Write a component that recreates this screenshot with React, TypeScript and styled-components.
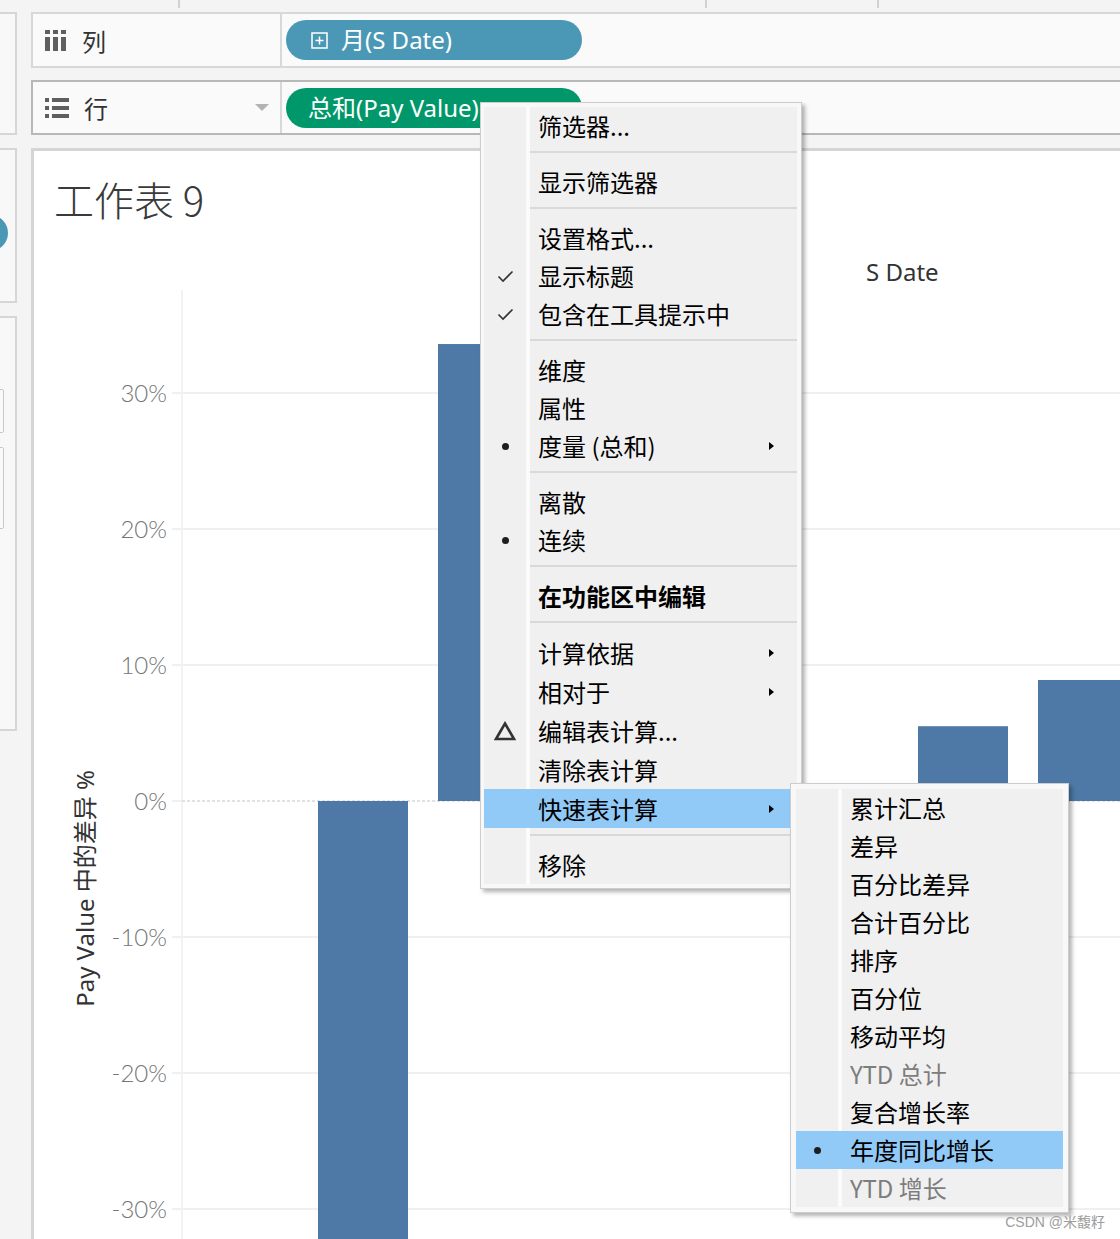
import { createGlobalStyle, styled } from 'styled-components'

type MenuEntry =
  | 'sep'
  | {
      label: string
      mark?: 'check' | 'dot' | 'delta'
      arrow?: boolean
      bold?: boolean
      active?: boolean
      muted?: boolean
      h?: number
    }

const mainMenu: MenuEntry[] = [
  { label: '筛选器...' },
  'sep',
  { label: '显示筛选器' },
  'sep',
  { label: '设置格式...' },
  { label: '显示标题', mark: 'check' },
  { label: '包含在工具提示中', mark: 'check' },
  'sep',
  { label: '维度' },
  { label: '属性' },
  { label: '度量 (总和)', mark: 'dot', arrow: true },
  'sep',
  { label: '离散' },
  { label: '连续', mark: 'dot' },
  'sep',
  { label: '在功能区中编辑', bold: true },
  'sep',
  { label: '计算依据', arrow: true, h: 39 },
  { label: '相对于', arrow: true, h: 39 },
  { label: '编辑表计算...', mark: 'delta', h: 39 },
  { label: '清除表计算', h: 39 },
  { label: '快速表计算', arrow: true, active: true, h: 39 },
  'sep',
  { label: '移除' },
]

const quickMenu: MenuEntry[] = [
  { label: '累计汇总' },
  { label: '差异' },
  { label: '百分比差异' },
  { label: '合计百分比' },
  { label: '排序' },
  { label: '百分位' },
  { label: '移动平均' },
  { label: 'YTD 总计', muted: true },
  { label: '复合增长率' },
  { label: '年度同比增长', mark: 'dot', active: true },
  { label: 'YTD 增长', muted: true },
]

// percent -> svg y, 0% sits at 511, 136px per 10%
const yOf = (v: number) => 511 - v * 13.6
const ticks = [30, 20, 10, 0, -10, -20, -30]
const bars = [
  { x: 208, v: -36 },
  { x: 328, v: 33.6 },
  { x: 808, v: 5.5 },
  { x: 928, v: 8.9 },
]

const MarkIcon = ({ kind }: { kind?: 'check' | 'dot' | 'delta' }) => {
  if (kind === 'check')
    return (
      <svg width="17" height="13" viewBox="0 0 17 13">
        <polyline points="1.5,6.5 6,11 15.5,1.5" fill="none" stroke="#333" strokeWidth="1.6" />
      </svg>
    )
  if (kind === 'dot') return <Dot />
  if (kind === 'delta')
    return (
      <svg width="22" height="20" viewBox="0 0 22 20">
        <polygon points="11,2.5 20,18 2,18" fill="none" stroke="#333" strokeWidth="2.6" strokeLinejoin="miter" />
      </svg>
    )
  return null
}

const Menu = ({ items }: { items: MenuEntry[] }) => (
  <MenuList>
    {items.map((it, i) =>
      it === 'sep' ? (
        <Separator key={i} />
      ) : (
        <MenuRow key={i} $h={it.h ?? 38} $active={it.active}>
          <Gutter>
            <MarkIcon kind={it.mark} />
          </Gutter>
          <MenuText $bold={it.bold} $muted={it.muted}>
            {it.label}
          </MenuText>
          <ArrowCell>{it.arrow && <Arrow />}</ArrowCell>
        </MenuRow>
      ),
    )}
  </MenuList>
)

const App = () => {
  return (
    <>
      <GlobalStyle />
      <Page>
        <TopStrip>
          <Tick $at={178} />
          <Tick $at={525} />
          <Tick $at={170} />
        </TopStrip>

        <LeftRail>
          <RailPanel $h={123} />
          <RailPanel $h={155}>
            <RailKnob />
          </RailPanel>
          <RailPanel $h={415}>
            <RailTab $top={71} $h={44} />
            <RailTab $top={14} $h={82} />
          </RailPanel>
        </LeftRail>

        <Main>
          <Shelf>
            <ShelfLabel>
              <svg width="22" height="21" viewBox="0 0 22 21">
                {[0, 8, 16].map((x) => (
                  <g key={x} fill="#5f5f5f">
                    <rect x={x} y="0" width="5" height="4" />
                    <rect x={x} y="7" width="5" height="14" />
                  </g>
                ))}
              </svg>
              <LabelText>列</LabelText>
            </ShelfLabel>
            <ShelfBody>
              <Pill $bg="#4a98b5" $pad={25}>
                <svg width="17" height="17" viewBox="0 0 17 17">
                  <rect x="1" y="1" width="15" height="15" fill="none" stroke="#fff" strokeWidth="1.5" />
                  <path d="M8.5 4.5v8M4.5 8.5h8" stroke="#fff" strokeWidth="1.5" />
                </svg>
                月(S Date)
              </Pill>
            </ShelfBody>
          </Shelf>

          <Shelf $dark>
            <ShelfLabel>
              <svg width="24" height="20" viewBox="0 0 24 20">
                {[0, 8, 16].map((y) => (
                  <g key={y} fill="#5f5f5f">
                    <rect x="0" y={y} width="4" height="4" />
                    <rect x="7" y={y} width="17" height="4" />
                  </g>
                ))}
              </svg>
              <LabelText>行</LabelText>
              <DropCaret />
            </ShelfLabel>
            <ShelfBody>
              <Pill $bg="#00986a" $pad={22}>
                总和(Pay Value)
              </Pill>
            </ShelfBody>
          </Shelf>

          <Worksheet>
            <SheetTitle>工作表 9</SheetTitle>
            <ColumnHeader>S Date</ColumnHeader>
            <ChartRow>
              <AxisTitleCell>
                <AxisTitle>Pay Value 中的差异 %</AxisTitle>
              </AxisTitleCell>
              <ChartSvg width="1010" height="949" viewBox="0 0 1010 949">
                <line x1="72" y1="0" x2="72" y2="949" stroke="#efefef" strokeWidth="1.5" />
                {ticks.map((t) => (
                  <g key={t}>
                    {t !== 0 && (
                      <line x1="62" y1={yOf(t)} x2="1010" y2={yOf(t)} stroke="#f0f0f0" strokeWidth="2" />
                    )}
                    {t === 0 && (
                      <>
                        <line x1="62" y1={yOf(0)} x2="72" y2={yOf(0)} stroke="#f0f0f0" strokeWidth="2" />
                        <line
                          x1="72"
                          y1={yOf(0)}
                          x2="1010"
                          y2={yOf(0)}
                          stroke="#c4c4c4"
                          strokeWidth="1"
                          strokeDasharray="3 2"
                        />
                      </>
                    )}
                    <TickLabel x="57" y={yOf(t) - 1} textAnchor="end" dominantBaseline="central">
                      {t}%
                    </TickLabel>
                  </g>
                ))}
                {bars.map((b) => (
                  <rect
                    key={b.x}
                    x={b.x}
                    y={Math.min(yOf(b.v), yOf(0))}
                    width="90"
                    height={Math.abs(yOf(b.v) - yOf(0))}
                    fill="#4e79a7"
                  />
                ))}
              </ChartSvg>
            </ChartRow>
          </Worksheet>
        </Main>

        <ContextMenu $left={480} $top={102} $pad="4px 4px 4px 3px">
          <Menu items={mainMenu} />
        </ContextMenu>
        <ContextMenu $left={790} $top={783} $pad="5px 5px 5px 5px">
          <SubList>
            <Menu items={quickMenu} />
          </SubList>
        </ContextMenu>

        <Watermark>CSDN @米馥籽</Watermark>
      </Page>
    </>
  )
}

const GlobalStyle = createGlobalStyle`
  html, body {
    margin: 0;
    padding: 0;
    background: #f4f4f4;
  }
  body {
    font-family: "Noto Sans", "Noto Sans CJK SC", sans-serif;
  }
`

const Page = styled.div`
  position: relative;
  width: 1120px;
  height: 1239px;
  overflow: hidden;
  background: #f4f4f4;
  display: grid;
  grid-template-columns: 17px 1fr;
  grid-template-rows: 12px 1fr;
  column-gap: 14px;
`

const TopStrip = styled.div`
  grid-column: 1 / -1;
  display: flex;
  align-items: flex-start;
`
const Tick = styled.div<{ $at: number }>`
  margin-left: ${(p) => p.$at}px;
  width: 2px;
  height: 8px;
  background: #d2d2d2;
`

const LeftRail = styled.div`
  display: flex;
  flex-direction: column;
  gap: 13px;
`
const RailPanel = styled.div<{ $h: number }>`
  box-sizing: border-box;
  height: ${(p) => p.$h}px;
  background: #f8f8f8;
  border: 2px solid #d6d6d6;
  border-left: none;
  display: flex;
  flex-direction: column;
  overflow: hidden;
`
const RailKnob = styled.div`
  flex: none;
  width: 36px;
  height: 36px;
  margin: 65px 0 0 -28px;
  border-radius: 50%;
  background: #4a98b5;
`
const RailTab = styled.div<{ $top: number; $h: number }>`
  flex: none;
  box-sizing: border-box;
  width: 6px;
  height: ${(p) => p.$h}px;
  margin: ${(p) => p.$top}px 0 0 -2px;
  background: #fafafa;
  border: 1.5px solid #c9c9c9;
  border-radius: 0 2px 2px 0;
`

const Main = styled.div`
  width: 1120px;
  display: flex;
  flex-direction: column;
`

const Shelf = styled.div<{ $dark?: boolean }>`
  display: flex;
  box-sizing: border-box;
  height: ${(p) => (p.$dark ? 55 : 56)}px;
  margin-bottom: ${(p) => (p.$dark ? 13 : 12)}px;
  background: #fafafa;
  border: 2px solid ${(p) => (p.$dark ? '#b8b8b8' : '#d8d8d8')};
  border-right: none;
`
const ShelfLabel = styled.div`
  width: 249px;
  flex: none;
  display: flex;
  align-items: center;
  padding-left: 12px;
  gap: 15px;
  box-sizing: border-box;
  border-right: 2px solid #d8d8d8;
`
const LabelText = styled.span`
  font-family: "Noto Sans CJK SC", sans-serif;
  font-size: 24px;
  color: #333;
`
const DropCaret = styled.span`
  margin-left: auto;
  margin-right: 11px;
  width: 0;
  height: 0;
  border-left: 7px solid transparent;
  border-right: 7px solid transparent;
  border-top: 7px solid #b3b3b3;
`
const ShelfBody = styled.div`
  flex: 1;
  display: flex;
  align-items: center;
  padding-left: 4px;
`
const Pill = styled.div<{ $bg: string; $pad: number }>`
  width: 296px;
  height: 40px;
  box-sizing: border-box;
  padding-left: ${(p) => p.$pad}px;
  padding-bottom: 3px;
  display: flex;
  align-items: center;
  gap: 13px;
  border-radius: 20px;
  background: ${(p) => p.$bg};
  color: #fff;
  font-family: "Noto Sans", "Noto Sans CJK SC", sans-serif;
  font-size: 24px;
  white-space: nowrap;
  & > svg {
    margin-top: 3px;
  }
`

const Worksheet = styled.div`
  flex: 1;
  display: flex;
  flex-direction: column;
  background: #fff;
  border-top: 3px solid #d5d5d5;
  border-left: 3px solid #d5d5d5;
`
const SheetTitle = styled.div`
  margin: 26px 0 0 20px;
  font-family: "Noto Sans CJK SC", sans-serif;
  font-size: 40px;
  line-height: 44px;
  font-weight: 300;
  color: #3a3a3a;
`
const ColumnHeader = styled.div`
  padding: 36px 0 3px 832px;
  font-family: "Noto Sans", sans-serif;
  font-size: 24px;
  line-height: 30px;
  color: #333;
`
const ChartRow = styled.div`
  flex: 1;
  display: flex;
`
const AxisTitleCell = styled.div`
  width: 76px;
  flex: none;
  box-sizing: border-box;
  padding: 480px 0 0 32px;
`
const AxisTitle = styled.div`
  width: 30px;
  display: flex;
  justify-content: center;
  writing-mode: vertical-rl;
  text-orientation: sideways;
  transform: rotate(180deg);
  font-family: "Noto Sans", "Noto Sans CJK SC", sans-serif;
  font-size: 24px;
  color: #333;
  white-space: nowrap;
`
const ChartSvg = styled.svg`
  display: block;
  flex: none;
  overflow: visible;
`
const TickLabel = styled.text`
  font-family: Lato, "Open Sans", sans-serif;
  font-size: 24px;
  font-weight: 300;
  fill: #767676;
`

const ContextMenu = styled.div<{ $left: number; $top: number; $pad: string }>`
  position: absolute;
  left: ${(p) => p.$left}px;
  top: ${(p) => p.$top}px;
  padding: ${(p) => p.$pad};
  background: #f8f8f8;
  border: 1px solid #cdcdcd;
  box-shadow: 3px 3px 4px rgba(0, 0, 0, 0.3);
`
const MenuList = styled.div`
  width: 313px;
  display: flex;
  flex-direction: column;
  background: linear-gradient(to right, #f0f0f0 0 42px, #fbfbfb 42px 46px, #f0f0f0 46px);
`
const SubList = styled.div`
  & > div {
    width: 267px;
  }
`
const MenuRow = styled.div<{ $h: number; $active?: boolean }>`
  height: ${(p) => p.$h}px;
  display: grid;
  grid-template-columns: 42px 4px 1fr 28px;
  align-items: center;
  background: ${(p) => (p.$active ? '#91c9f7' : 'transparent')};
`
const Gutter = styled.div`
  grid-column: 1;
  display: flex;
  justify-content: center;
  align-items: center;
`
const Dot = styled.span`
  width: 7px;
  height: 7px;
  border-radius: 50%;
  background: #1e1e1e;
`
const MenuText = styled.span<{ $bold?: boolean; $muted?: boolean }>`
  grid-column: 3;
  padding-left: 8px;
  font-family: "Noto Sans CJK SC", sans-serif;
  font-size: 24px;
  line-height: 30px;
  font-weight: ${(p) => (p.$bold ? 700 : 400)};
  color: ${(p) => (p.$muted ? '#7d7d7d' : '#000')};
  white-space: nowrap;
`
const ArrowCell = styled.div`
  grid-column: 4;
  display: flex;
  align-items: center;
`
const Arrow = styled.span`
  width: 0;
  height: 0;
  border-top: 4px solid transparent;
  border-bottom: 4px solid transparent;
  border-left: 5px solid #000;
`
const Separator = styled.div`
  height: 18px;
  box-sizing: border-box;
  padding-top: 6px;
  &::after {
    content: '';
    display: block;
    margin-left: 46px;
    height: 2px;
    background: #d9d9d9;
  }
`

const Watermark = styled.div`
  position: absolute;
  right: 15px;
  bottom: 8px;
  font-family: "Liberation Sans", "Noto Sans CJK SC", sans-serif;
  font-size: 14px;
  color: #9d9d9d;
`

export default App
